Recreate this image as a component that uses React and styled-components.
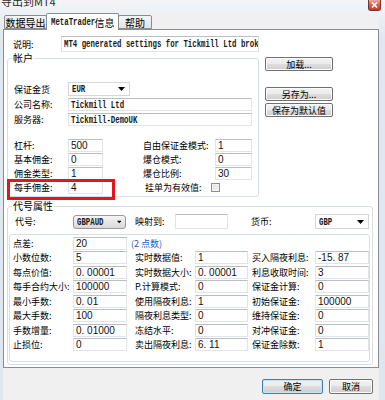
import React from 'react';
import styled, { createGlobalStyle } from 'styled-components';

const cjk = `"Noto Sans CJK SC", "Noto Sans", sans-serif`;

const GlobalStyle = createGlobalStyle`
  html, body {
    margin: 0;
    padding: 0;
  }
  body {
    width: 385px;
    height: 400px;
    overflow: hidden;
    background: #dfe6ee;
    font-family: ${cjk};
  }
`;

const Window = styled.div`
  width: 385px;
  height: 400px;
  display: flex;
  flex-direction: column;
  background: linear-gradient(#f3f5f8, #e1e7ee 40px, #dfe6ee);
`;

const TitleBar = styled.div`
  height: 13px;
  flex: none;
  display: flex;
  justify-content: space-between;
  align-items: flex-start;
  padding: 0 4px 0 1px;
  overflow: hidden;
`;

const TitleText = styled.span`
  display: block;
  margin-top: -6px;
  font: 11px ${cjk};
  line-height: 14px;
  color: #2a2a2a;
`;

const CloseBtn = styled.div`
  width: 13px;
  height: 11px;
  box-sizing: border-box;
  border: 1px solid #7a3128;
  border-top: none;
  border-radius: 0 0 3px 3px;
  background: linear-gradient(#eaa89a, #d4604f 50%, #c33d2b);
  display: flex;
  align-items: center;
  justify-content: center;
`;

const Client = styled.div`
  flex: 1;
  margin: 0 6px 0 3px;
  background: #f0f0f0;
  display: flex;
  flex-direction: column;
`;

const TabStrip = styled.div`
  height: 16px;
  flex: none;
  display: flex;
  align-items: flex-end;
  padding-left: 1px;
`;

const Tab = styled.div`
  box-sizing: border-box;
  width: ${p => p.$w}px;
  height: ${p => (p.$active ? 17 : 14)}px;
  margin: ${p => (p.$active ? '0 -1px -1px' : '0')};
  position: relative;
  z-index: ${p => (p.$active ? 2 : 1)};
  border: 1px solid #898c95;
  border-bottom: ${p => (p.$active ? 'none' : '1px solid #898c95')};
  border-radius: 2px 2px 0 0;
  background: ${p => (p.$active ? '#fff' : 'linear-gradient(#f5f5f5, #e3e3e3)')};
  display: flex;
  align-items: center;
  justify-content: center;
  font: 10px ${cjk};
  color: #000;
  white-space: nowrap;
`;

const Panel = styled.div`
  height: 339px;
  flex: none;
  box-sizing: border-box;
  border: 1px solid #898c95;
  background: #fff;
  padding: 6px 0 0 3px;
  position: relative;
  z-index: 1;
`;

const Mono = styled.span`
  display: inline-block;
  font: bold 11px "Liberation Mono", "DejaVu Sans Mono", monospace;
  color: #1a1a1a;
  transform: scaleX(0.67);
  transform-origin: left center;
  white-space: nowrap;
`;

const Label = styled.span`
  display: flex;
  align-items: center;
  padding-left: ${p => p.$indent || 0}px;
  width: ${p => (p.$w ? `${p.$w}px` : 'auto')};
  flex: none;
  box-sizing: border-box;
  font: 9px ${cjk};
  color: #000;
  white-space: nowrap;
`;

const Field = styled.div`
  box-sizing: border-box;
  width: ${p => (p.$w ? `${p.$w}px` : '100%')};
  height: ${p => p.$h || 13}px;
  flex: none;
  border: 1px solid #e0e4e9;
  border-top-color: #b9bdc4;
  background: #fff;
  display: flex;
  align-items: center;
  padding-left: 2px;
  overflow: hidden;
  font: 10px "Liberation Sans", Arial, sans-serif;
  color: #111;
  white-space: nowrap;
`;

const Select = styled.div`
  box-sizing: border-box;
  width: ${p => p.$w}px;
  height: ${p => p.$h || 14}px;
  flex: none;
  border: 1px solid ${p => (p.$button ? '#9a9a9a' : '#d3d6dc')};
  border-radius: ${p => (p.$button ? '3px' : '0')};
  background: ${p => (p.$button ? 'linear-gradient(#f6f6f6, #e6e6e6 50%, #d9d9d9)' : '#fff')};
  display: flex;
  align-items: center;
  justify-content: space-between;
  padding: 0 4px 0 3px;
  overflow: hidden;
`;

const Arrow = () => (
  <svg width="7" height="4" viewBox="0 0 7 4">
    <path d="M0 0h7L3.5 4z" fill="#000" />
  </svg>
);

const DescRow = styled.div`
  height: 16px;
  display: flex;
  align-items: center;
  padding-left: 6px;
`;

const MainArea = styled.div`
  display: flex;
  align-items: flex-start;
  gap: 6px;
  margin-top: 5px;
`;

const Group = styled.div`
  position: relative;
  box-sizing: border-box;
  width: ${p => p.$w}px;
  height: ${p => p.$h}px;
  margin-top: ${p => p.$mt || 0}px;
  border: 1px solid #d5dfe5;
  border-radius: 3px;
  padding: ${p => p.$pad};
`;

const Caption = styled.span`
  position: absolute;
  top: -7px;
  left: 4px;
  padding: 0 1px;
  background: #fff;
  font: 10px ${cjk};
  line-height: 12px;
  color: #000;
`;

const Row = styled.div`
  display: flex;
  align-items: center;
  height: ${p => p.$h || 13}px;
  margin-bottom: ${p => p.$mb || 0}px;
`;

const FieldCols = styled.div`
  display: flex;
  gap: 40px;
  margin-top: 13px;
`;

const FieldCol = styled.div`
  display: grid;
  grid-template-columns: ${p => p.$cols};
  grid-auto-rows: 13px;
  row-gap: 1px;
`;

const CheckCell = styled.div`
  grid-column: 1 / span 2;
  display: flex;
  align-items: center;
  padding-left: 2px;
`;

const Checkbox = styled.span`
  width: 9px;
  height: 9px;
  box-sizing: border-box;
  border: 1px solid #8f8f8f;
  background: linear-gradient(135deg, #dcdcdc, #f8f8f8);
  box-shadow: inset 0 0 0 1px #f4f4f4;
`;

const Highlight = styled.div`
  position: absolute;
  left: -1px;
  top: 120px;
  width: 108px;
  height: 21px;
  box-sizing: border-box;
  border: 3px solid #e8141c;
`;

const ButtonCol = styled.div`
  display: flex;
  flex-direction: column;
  width: 68px;
`;

const Button = styled.div`
  box-sizing: border-box;
  width: ${p => (p.$w ? `${p.$w}px` : '100%')};
  height: ${p => p.$h || 14}px;
  margin-bottom: ${p => p.$mb || 0}px;
  border: 1px solid ${p => (p.$default ? '#3c7fb1' : '#707070')};
  border-radius: 2px;
  background: linear-gradient(#f2f2f2, #ebebeb 50%, #dddddd 50%, #cfcfcf);
  box-shadow: inset 0 0 0 1px ${p => (p.$default ? '#c6e4f8' : '#fbfbfb')};
  display: flex;
  align-items: center;
  justify-content: center;
  font: 9px ${cjk};
  color: #000;
  white-space: nowrap;
`;

const SymbolTop = styled.div`
  display: flex;
  align-items: center;
  height: 15px;
  padding-left: 7px;
`;

const InnerBox = styled.div`
  box-sizing: border-box;
  width: 361px;
  height: 128px;
  margin: 5px 0 0 1px;
  border: 1px solid #d5dfe5;
  border-radius: 3px;
  padding: 2px 0 0 3px;
  display: grid;
  grid-template-columns: 60px 54px 68px 53px 67px 54px;
  grid-auto-rows: 13px;
  row-gap: 1.43px;
`;

const Hint = styled.span`
  grid-column: 3 / span 4;
  display: flex;
  align-items: center;
  padding-left: 4px;
  font: 9px ${cjk};
  color: #2259d6;
  white-space: nowrap;
`;

const Footer = styled.div`
  display: flex;
  justify-content: flex-end;
  gap: 6px;
  padding: 11px 6px 0 0;
`;

const symbolRows = [
  ['点差:', '20', null, null, null, null],
  ['小数位数:', '5', '实时数据值:', '1', '买入隔夜利息:', '-15. 87'],
  ['每点价值:', '0. 00001', '实时数据大小:', '0. 00001', '利息收取时间:', '3'],
  ['每手合约大小:', '100000', 'P.计算模式:', '0', '保证金计算:', '0'],
  ['最小手数:', '0. 01', '使用隔夜利息:', '1', '初始保证金:', '100000'],
  ['最大手数:', '100', '隔夜利息类型:', '0', '维持保证金:', '0'],
  ['手数增量:', '0. 01000', '冻结水平:', '0', '对冲保证金:', '0'],
  ['止损位:', '0', '卖出隔夜利息:', '6. 11', '保证金除数:', '1'],
];

const leftFields = [
  ['杠杆:', '500'],
  ['基本佣金:', '0'],
  ['佣金类型:', '1'],
  ['每手佣金:', '4'],
];

const rightFields = [
  ['自由保证金模式:', '1'],
  ['爆仓模式:', '0'],
  ['爆仓比例:', '30'],
];

const App = () => {
  return (
    <>
      <GlobalStyle />
      <Window>
        <TitleBar>
          <TitleText>导出到MT4</TitleText>
          <CloseBtn>
            <svg width="7" height="6" viewBox="0 0 7 6">
              <path d="M1 0.5l5 5M6 0.5l-5 5" stroke="#fff" strokeWidth="1.6" />
            </svg>
          </CloseBtn>
        </TitleBar>
        <Client>
          <TabStrip>
            <Tab $w={43}>数据导出</Tab>
            <Tab $w={73} $active>
              <Mono style={{ width: 44 }}>MetaTrader</Mono>信息
            </Tab>
            <Tab $w={34}>帮助</Tab>
          </TabStrip>
          <Panel>
            <DescRow>
              <Label $w={48}>说明:</Label>
              <Field $w={198} $h={16}>
                <Mono>MT4 generated settings for Tickmill Ltd broker</Mono>
              </Field>
            </DescRow>

            <MainArea>
              <Group $w={252} $h={139} $mt={1} $pad="23px 0 0 6px">
                <Caption>帐户</Caption>
                <Row $h={14} $mb={2}>
                  <Label $w={54}>保证金货</Label>
                  <Select $w={62}>
                    <Mono>EUR</Mono>
                    <Arrow />
                  </Select>
                </Row>
                <Row $mb={2}>
                  <Label $w={54}>公司名称:</Label>
                  <Field $w={184}>
                    <Mono>Tickmill Ltd</Mono>
                  </Field>
                </Row>
                <Row>
                  <Label $w={54}>服务器:</Label>
                  <Field $w={184}>
                    <Mono>Tickmill-DemoUK</Mono>
                  </Field>
                </Row>
                <FieldCols>
                  <FieldCol $cols="54px 35px">
                    {leftFields.map(([l, v]) => (
                      <React.Fragment key={l}>
                        <Label>{l}</Label>
                        <Field>{v}</Field>
                      </React.Fragment>
                    ))}
                  </FieldCol>
                  <FieldCol $cols="72px 37px">
                    {rightFields.map(([l, v]) => (
                      <React.Fragment key={l}>
                        <Label>{l}</Label>
                        <Field>{v}</Field>
                      </React.Fragment>
                    ))}
                    <CheckCell>
                      <Label $w={66}>挂单为有效值:</Label>
                      <Checkbox />
                    </CheckCell>
                  </FieldCol>
                </FieldCols>
                <Highlight />
              </Group>

              <ButtonCol>
                <Button $mb={16}>加载...</Button>
                <Button $mb={2}>另存为...</Button>
                <Button>保存为默认值</Button>
              </ButtonCol>
            </MainArea>

            <Group $w={366} $h={159} $mt={9} $pad="7px 0 0 0">
              <Caption>代号属性</Caption>
              <SymbolTop>
                <Label $w={58}>代号:</Label>
                <Select $w={53} $button>
                  <Mono>GBPAUD</Mono>
                  <Arrow />
                </Select>
                <Label $w={49} $indent={9}>映射到:</Label>
                <Field $w={53} $h={15} />
                <Label $w={87} $indent={23}>货币:</Label>
                <Select $w={54} $h={15}>
                  <Mono>GBP</Mono>
                  <Arrow />
                </Select>
              </SymbolTop>
              <InnerBox>
                {symbolRows.map(([l1, v1, l2, v2, l3, v3], i) => (
                  <React.Fragment key={l1}>
                    <Label>{l1}</Label>
                    <Field>{v1}</Field>
                    {i === 0 ? (
                      <Hint>(2 点数)</Hint>
                    ) : (
                      <>
                        <Label $indent={8}>{l2}</Label>
                        <Field>{v2}</Field>
                        <Label $indent={4}>{l3}</Label>
                        <Field>{v3}</Field>
                      </>
                    )}
                  </React.Fragment>
                ))}
              </InnerBox>
            </Group>
          </Panel>
          <Footer>
            <Button $w={61} $h={15} $default>确定</Button>
            <Button $w={44} $h={15}>取消</Button>
          </Footer>
        </Client>
      </Window>
    </>
  );
};

export default App;
